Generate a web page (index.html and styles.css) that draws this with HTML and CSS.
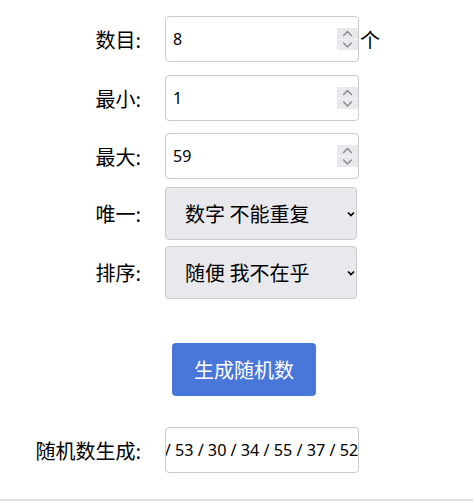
FILE: index.html
```html
<!DOCTYPE html>
<html lang="zh-CN">
<head>
<meta charset="utf-8">
<title>随机数生成器</title>
<link rel="stylesheet" href="styles.css">
</head>
<body>
<main class="form">
  <div class="row row-count">
    <label class="lbl" for="count">数目:</label>
    <div class="ctrl">
      <div class="num-wrap">
        <input id="count" class="field" type="number" value="8">
        <span class="spin" aria-hidden="true">
          <svg class="spin-up" viewBox="0 0 10 6" width="10" height="6"><path d="M1.5 5 L5 1.5 L8.5 5"/></svg>
          <svg class="spin-down" viewBox="0 0 10 6" width="10" height="6"><path d="M1.5 1 L5 4.5 L8.5 1"/></svg>
        </span>
      </div>
      <span class="unit">个</span>
    </div>
  </div>
  <div class="row row-min">
    <label class="lbl" for="min">最小:</label>
    <div class="ctrl">
      <div class="num-wrap">
        <input id="min" class="field" type="number" value="1">
        <span class="spin" aria-hidden="true">
          <svg class="spin-up" viewBox="0 0 10 6" width="10" height="6"><path d="M1.5 5 L5 1.5 L8.5 5"/></svg>
          <svg class="spin-down" viewBox="0 0 10 6" width="10" height="6"><path d="M1.5 1 L5 4.5 L8.5 1"/></svg>
        </span>
      </div>
    </div>
  </div>
  <div class="row row-max">
    <label class="lbl" for="max">最大:</label>
    <div class="ctrl">
      <div class="num-wrap">
        <input id="max" class="field" type="number" value="59">
        <span class="spin" aria-hidden="true">
          <svg class="spin-up" viewBox="0 0 10 6" width="10" height="6"><path d="M1.5 5 L5 1.5 L8.5 5"/></svg>
          <svg class="spin-down" viewBox="0 0 10 6" width="10" height="6"><path d="M1.5 1 L5 4.5 L8.5 1"/></svg>
        </span>
      </div>
    </div>
  </div>
  <div class="row row-unique">
    <label class="lbl" for="unique">唯一:</label>
    <div class="ctrl">
      <select id="unique" class="pick">
        <option>数字 不能重复</option>
        <option>数字 可以重复</option>
      </select>
    </div>
  </div>
  <div class="row row-sort">
    <label class="lbl" for="sort">排序:</label>
    <div class="ctrl">
      <select id="sort" class="pick">
        <option>随便 我不在乎</option>
        <option>从小到大</option>
        <option>从大到小</option>
      </select>
    </div>
  </div>
  <div class="row row-action">
    <span class="lbl"></span>
    <div class="ctrl"><button class="btn" type="button">生成随机数</button></div>
  </div>
  <div class="row row-result">
    <label class="lbl" for="result">随机数生成:</label>
    <div class="ctrl"><input id="result" class="field result-field" type="text" readonly value="16 / 41 / 53 / 30 / 34 / 55 / 37 / 52"></div>
  </div>
</main>
<div class="bottom-line"></div>
<script src="app.js"></script>
</body>
</html>
```
FILE: styles.css
```css
html, body {
  margin: 0;
  padding: 0;
  background: #fff;
}
body {
  font-family: "Noto Sans CJK SC", "Noto Sans", sans-serif;
  color: #000;
}
.form {
  display: flex;
  flex-direction: column;
  padding-top: 16px;
}
.row {
  display: flex;
  align-items: center;
  column-gap: 24px;
}
.row-min { margin-top: 13px; }
.row-max { margin-top: 12px; }
.row-unique { margin-top: 8px; }
.row-sort { margin-top: 6px; }
.row-action { margin-top: 44px; }
.row-result { margin-top: 31px; }
.lbl {
  flex: none;
  width: 141px;
  text-align: right;
  font-size: 20px;
}
.ctrl {
  display: flex;
  align-items: center;
  column-gap: 1px;
}
.num-wrap {
  position: relative;
  display: flex;
}
.field {
  box-sizing: border-box;
  width: 194px;
  height: 46px;
  margin: 0;
  padding: 0 0 0 7px;
  border: 1px solid #cbcbcb;
  border-radius: 4px;
  background: #fff;
  color: #000;
  font-family: "Noto Sans", sans-serif;
  font-size: 16px;
  outline: none;
  -moz-appearance: textfield;
}
.field::-webkit-inner-spin-button,
.field::-webkit-outer-spin-button {
  -webkit-appearance: none;
  margin: 0;
}
.result-field {
  padding-left: 0;
  font-size: 16.2px;
}
.spin {
  position: absolute;
  top: 12px;
  right: 1px;
  width: 21px;
  height: 22px;
  display: flex;
  flex-direction: column;
  background: #e9e9ed;
}
.spin svg {
  flex: 1;
  width: 21px;
  height: 11px;
  padding: 0 5px;
  box-sizing: border-box;
}
.spin-up { border-bottom: 1px solid #f4f4f6; }
.spin path {
  fill: none;
  stroke: #8a8a8e;
  stroke-width: 1.3;
  stroke-linecap: round;
  stroke-linejoin: round;
}
.unit {
  font-size: 20px;
}
.pick {
  box-sizing: border-box;
  width: 192px;
  height: 53px;
  margin: 0;
  padding: 0 0 0 19px;
  border: 1px solid #cbcbcb;
  border-radius: 4px;
  -webkit-appearance: none;
  appearance: none;
  background-color: #e9e9ed;
  background-image: url("data:image/svg+xml,%3Csvg xmlns='http://www.w3.org/2000/svg' width='8' height='6' viewBox='0 0 8 6'%3E%3Cpath d='M1 1.5 L4 4.5 L7 1.5' fill='none' stroke='%23000' stroke-width='1.7'/%3E%3C/svg%3E");
  background-repeat: no-repeat;
  background-position: right 1px center;
  color: #000;
  font-family: "Noto Sans CJK SC", "Noto Sans", sans-serif;
  font-size: 20px;
}
.btn {
  margin: 0 0 0 7px;
  width: 144px;
  height: 53px;
  border: none;
  border-radius: 4px;
  background: #4976d9;
  color: #fff;
  font-family: "Noto Sans CJK SC", "Noto Sans", sans-serif;
  font-size: 20px;
  padding: 0;
}
.bottom-line {
  margin-top: 26px;
  border-top: 2px solid #e2e2e2;
}
```
FILE: app.js
```js
var r = document.getElementById('result');
r.scrollLeft = r.scrollWidth;
```
